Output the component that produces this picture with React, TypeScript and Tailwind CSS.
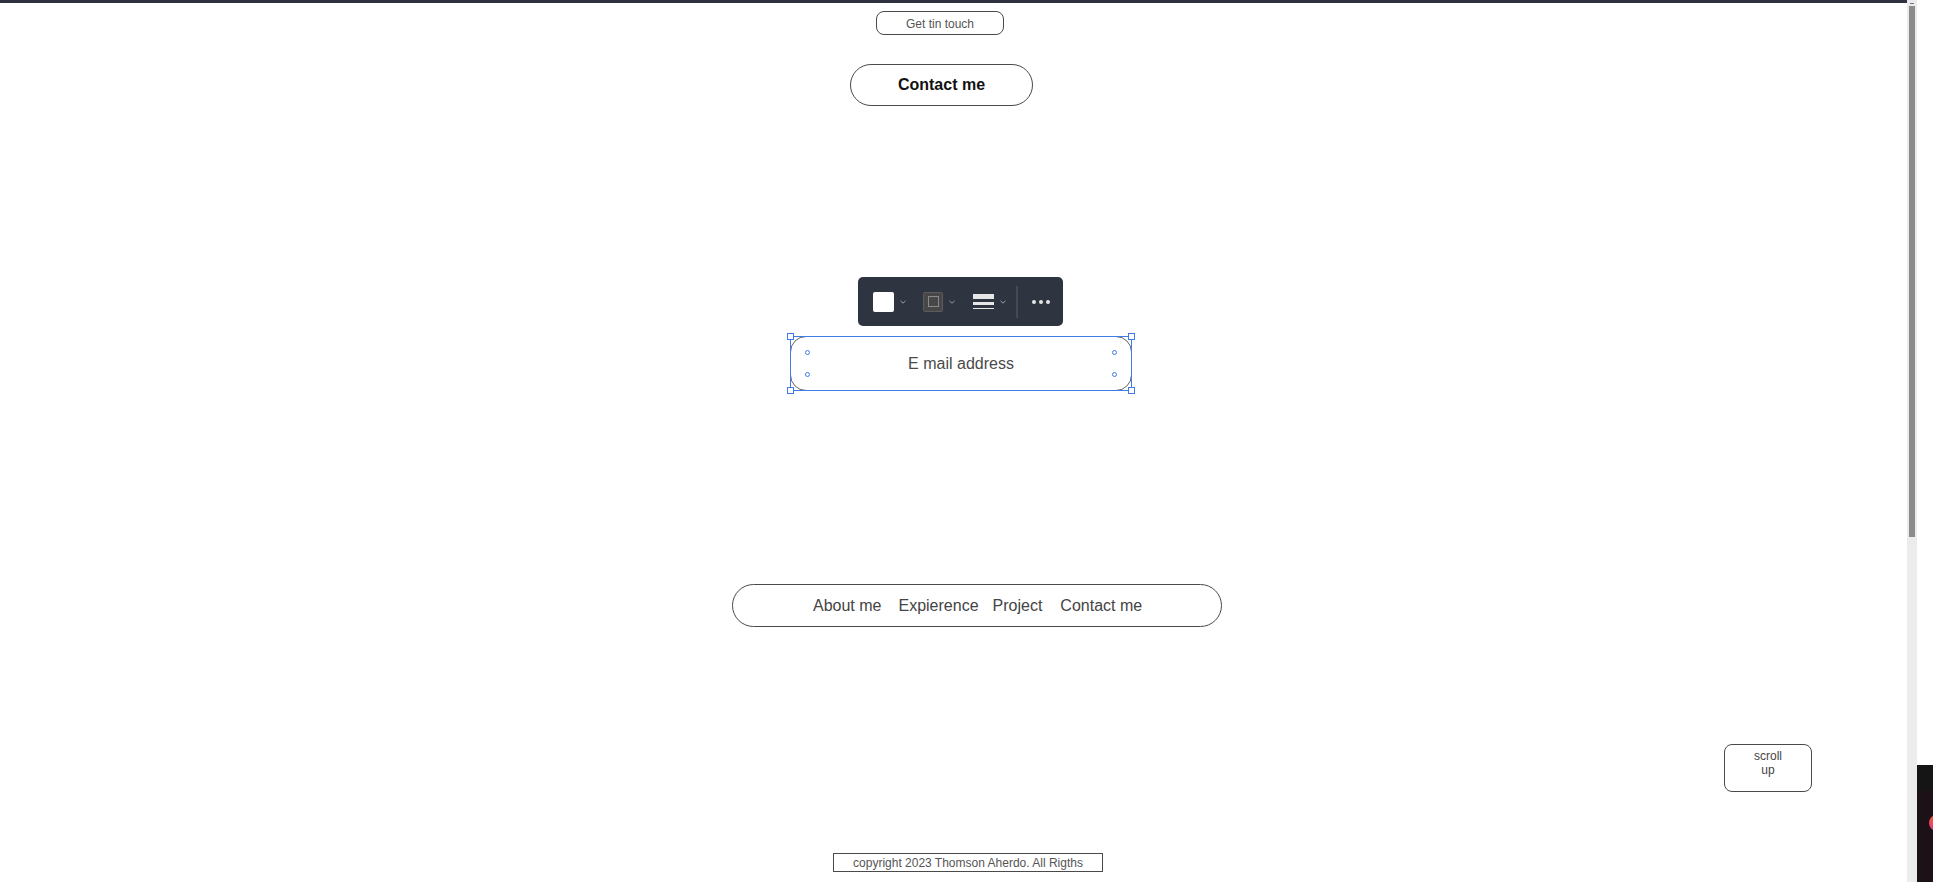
import { useState } from "react";

function Chevron() {
  return (
    <svg width="6" height="4" viewBox="0 0 6 4" className="ml-[6px]">
      <polyline points="0.5,0.8 3,3.2 5.5,0.8" fill="none" stroke="#9aa0ab" strokeWidth="1" />
    </svg>
  );
}

function Toolbar() {
  return (
    <div className="absolute left-[68px] -top-[59px] w-[205px] h-[49px] rounded-[5px] bg-[#2f3441] flex items-center pl-[15px]">
      {/* fill */}
      <div className="flex items-center">
        <div className="w-[21px] h-[20px] rounded-[2px] bg-white" />
        <Chevron />
      </div>
      {/* stroke */}
      <div className="flex items-center ml-[17px]">
        <div className="w-[20px] h-[20px] rounded-[2px] bg-[#474747] border border-[#5c5c5c] flex items-center justify-center">
          <div className="w-[11px] h-[11px] border-[1.5px] border-[#8a8a8a]" />
        </div>
        <Chevron />
      </div>
      {/* stroke width */}
      <div className="flex items-center ml-[18px]">
        <div className="w-[21px] flex flex-col">
          <div className="h-[5px] bg-[#e6e6e6]" />
          <div className="h-[3px] bg-[#e6e6e6] mt-[3px]" />
          <div className="h-[1.5px] bg-[#e6e6e6] mt-[3px]" />
        </div>
        <Chevron />
      </div>
      <div className="w-[2px] h-[32px] bg-[#444a56] ml-[10px]" />
      <div className="flex items-center gap-[3px] ml-[14px]">
        <span className="w-[4px] h-[4px] rounded-full bg-[#e6e6e6]" />
        <span className="w-[4px] h-[4px] rounded-full bg-[#e6e6e6]" />
        <span className="w-[4px] h-[4px] rounded-full bg-[#e6e6e6]" />
      </div>
    </div>
  );
}

function Handle({ className }: { className: string }) {
  return <span className={`absolute w-[7px] h-[7px] bg-white border border-[#3f7be9] ${className}`} />;
}

function Dot({ className }: { className: string }) {
  return <span className={`absolute w-[5px] h-[5px] rounded-full bg-white border border-[#3f7be9] ${className}`} />;
}

export default function App() {
  const [email] = useState("E mail address");

  return (
    <div className="h-[882px] w-full overflow-hidden flex bg-white font-['Liberation_Sans',Arial,sans-serif]">
      <div className="flex-1 flex flex-col">
        <div className="h-[3px] bg-[#2d323e]" />

        <button className="mt-[8px] ml-[876px] w-[128px] h-[24px] rounded-[8px] border border-[#4a4a4a] text-[12px] text-[#555] pt-[1px]">
          Get tin touch
        </button>

        <button className="mt-[29px] ml-[850px] w-[183px] h-[42px] rounded-[21px] border border-[#4a4a4a] text-[16px] font-bold text-[#111]">
          Contact me
        </button>

        {/* selected email field */}
        <div className="relative mt-[230px] ml-[790px] w-[342px] h-[55px]">
          <Toolbar />
          <div className="w-full h-full rounded-[16px] border border-[#666] flex items-center justify-center text-[16px] text-[#4a4a4a]">
            {email}
          </div>
          <div className="absolute inset-0 border border-[#3f7be9] pointer-events-none" />
          <Handle className="-left-[3px] -top-[3px]" />
          <Handle className="-right-[3px] -top-[3px]" />
          <Handle className="-left-[3px] -bottom-[3px]" />
          <Handle className="-right-[3px] -bottom-[3px]" />
          <Dot className="left-[15px] top-[14px]" />
          <Dot className="left-[15px] top-[36px]" />
          <Dot className="left-[322px] top-[14px]" />
          <Dot className="left-[322px] top-[36px]" />
        </div>

        <nav className="mt-[193px] ml-[732px] w-[490px] h-[43px] rounded-full border border-[#4a4a4a] flex items-center pl-[80px] text-[16px] text-[#444]">
          <a>About me</a>
          <a className="ml-[17px]">Expierence</a>
          <a className="ml-[14px]">Project</a>
          <a className="ml-[18px]">Contact me</a>
        </nav>

        <button className="mt-[117px] ml-[1724px] w-[88px] h-[48px] rounded-[8px] border border-[#4a4a4a] text-[12px] leading-[14px] text-[#444] flex flex-col items-center pt-[4px]">
          <span>scroll</span>
          <span>up</span>
        </button>

        <div className="mt-[61px] ml-[833px] w-[270px] h-[19px] border border-[#4a4a4a] flex items-center justify-center text-[12px] text-[#555]">
          copyright 2023 Thomson Aherdo. All Rigths
        </div>
      </div>

      {/* fake scrollbar */}
      <div className="w-[10px] bg-[#ececec] flex flex-col items-center pt-[3px]">
        <div className="w-[4px] h-[1px] bg-[#777]" />
        <div className="w-[6px] h-[531px] bg-[#8c8c8c] mt-[2px]" />
      </div>

      <div className="w-[16px] flex flex-col">
        <div className="flex-1" />
        <div className="h-[117px] bg-[#1b1117] flex flex-col">
          <div className="h-[26px] bg-[#151515]" />
          <div className="mt-[24px] ml-[12px] w-[16px] h-[16px] rounded-full bg-gradient-to-b from-[#ff5a36] to-[#e0307a]" />
        </div>
      </div>
    </div>
  );
}
